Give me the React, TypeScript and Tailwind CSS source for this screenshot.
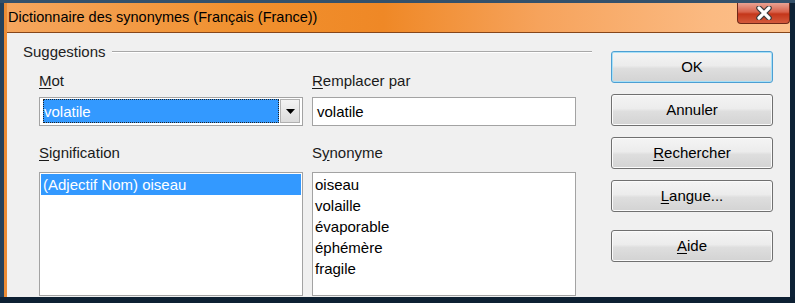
import React from 'react';

const font = { fontFamily: '"Liberation Sans", Arial, sans-serif' };

const synonyms = ['oiseau', 'volaille', 'évaporable', 'éphémère', 'fragile'];

const Btn: React.FC<{ children: React.ReactNode; primary?: boolean; className?: string }> = ({ children, primary, className }) => (
  <div
    className={
      'h-[32px] w-[162px] flex items-center justify-center rounded-[3px] border text-[15px] text-black bg-[linear-gradient(#f4f4f4,#ececec_45%,#dedede_55%,#d3d3d3)] ' +
      (primary
        ? 'border-[#4c9fd3] shadow-[inset_0_0_0_1px_#a8e0f7] '
        : 'border-[#707070] shadow-[inset_0_0_0_1px_#fbfbfb] ') +
      (className ?? '')
    }
  >
    {children}
  </div>
);

const CloseButton = () => (
  <div className="w-[53px] h-[21px] rounded-b-[4px] border border-t-0 border-[#6e2818] bg-[linear-gradient(#eaa393,#d8614a_45%,#c4361a_55%,#d45a3c)] flex items-center justify-center">
    <svg width="18" height="14" viewBox="0 0 18 14">
      <path d="M4 2 L14 12 M14 2 L4 12" stroke="#3c3c3c" strokeWidth="5.5" strokeLinecap="round" />
      <path d="M4 2 L14 12 M14 2 L4 12" stroke="#ffffff" strokeWidth="3.2" strokeLinecap="round" />
    </svg>
  </div>
);

export default function App() {
  return (
    <div className="w-[795px] h-[303px] bg-[#0e2236] flex flex-col overflow-hidden" style={font}>
      <div className="h-[3px] bg-[#34516b] shrink-0" />
      <div className="flex flex-1 min-h-0">
        <div className="w-[4px] bg-[#25425d]" />
        <div className="flex-1 flex flex-col border-l-[3px] border-[#ec8c35]">
          {/* title bar */}
          <div className="h-[30px] shrink-0 flex justify-between border-b border-[#86461a] bg-[linear-gradient(90deg,#f5a65e,#f0902e_30%,#ef8826_48%,#f6a35c_68%,#fbba82_90%,#fcc08a)]">
            <div className="pl-[1px] pt-[4px] text-[14.5px] text-black leading-[20px]">
              Dictionnaire des synonymes (Français (France))
            </div>
            <CloseButton />
          </div>

          {/* content */}
          <div className="flex-1 bg-[#f0f0f0] flex pl-[16px] pt-[10px] text-[15px] text-[#1a1a1a]">
            <div className="w-[569px] flex flex-col">
              <div className="h-[18px] flex items-center">
                <span className="text-[#222]">Suggestions</span>
                <div className="flex-1 ml-[6px] h-[2px] border-t border-[#a8a8a8] border-b border-b-white" />
              </div>

              <div className="pl-[16px] grid grid-cols-[264px_264px] gap-x-[9px]">
                <div className="flex flex-col">
                  <div className="mt-[11px] h-[18px] leading-[18px]">
                    <span className="underline underline-offset-2">M</span>ot
                  </div>
                  <div className="mt-[7px] h-[29px] border border-[#a3a3a3] bg-white flex pl-[3px] pr-[2px] pt-[1px] pb-[2px]">
                    <div className="flex-1 bg-[#3399ff] border border-dotted border-[#222] text-white leading-[22px] pt-[1px] overflow-hidden">
                      volatile
                    </div>
                    <div className="ml-[1px] w-[20px] border border-[#b0b0b0] bg-[linear-gradient(#f3f3f3,#dcdcdc)] flex items-center justify-center">
                      <svg width="9" height="5" viewBox="0 0 9 5">
                        <path d="M0 0 H9 L4.5 5 Z" fill="#000" />
                      </svg>
                    </div>
                  </div>
                  <div className="mt-[18px] h-[18px] leading-[18px]">
                    <span className="underline underline-offset-2">S</span>ignification
                  </div>
                  <div className="mt-[10px] h-[124px] border border-[#a3a3a3] bg-white p-[1px]">
                    <div className="h-[21px] bg-[#3399ff] text-white leading-[21px] pl-[2px]">(Adjectif Nom) oiseau</div>
                  </div>
                </div>

                <div className="flex flex-col">
                  <div className="mt-[11px] h-[18px] leading-[18px]">
                    <span className="underline underline-offset-2">R</span>emplacer par
                  </div>
                  <div className="mt-[7px] h-[29px] border border-[#a3a3a3] bg-white pl-[4px] leading-[27px] text-black">
                    volatile
                  </div>
                  <div className="mt-[18px] h-[18px] leading-[18px]">
                    S<span className="underline underline-offset-2">y</span>nonyme
                  </div>
                  <div className="mt-[10px] h-[124px] border border-[#a3a3a3] bg-white pt-[1px] pl-[2px] text-black">
                    {synonyms.map((s) => (
                      <div key={s} className="h-[21px] leading-[21px]">{s}</div>
                    ))}
                  </div>
                </div>
              </div>
            </div>

            <div className="ml-[19px] pt-[8px] flex flex-col">
              <Btn primary className="h-[31px]">OK</Btn>
              <Btn className="mt-[11px]">Annuler</Btn>
              <Btn className="mt-[11px] h-[31px]">
                <span><span className="underline underline-offset-2">R</span>echercher</span>
              </Btn>
              <Btn className="mt-[11px]">
                <span><span className="underline underline-offset-2">L</span>angue...</span>
              </Btn>
              <Btn className="mt-[18px]">
                <span><span className="underline underline-offset-2">A</span>ide</span>
              </Btn>
            </div>
          </div>
        </div>
        <div className="w-[5px] bg-[#0e2236]" />
      </div>
      <div className="h-[6px] shrink-0 bg-[#0d2033]" />
    </div>
  );
}
